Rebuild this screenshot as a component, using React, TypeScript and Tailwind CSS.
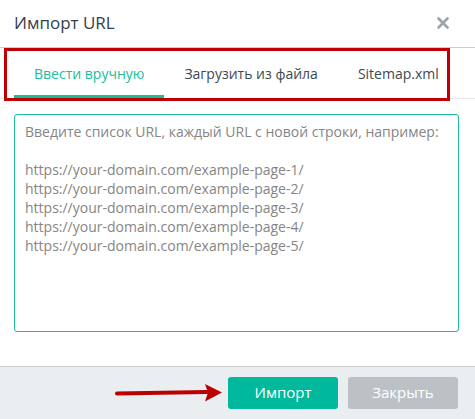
import { useState } from "react";

const tabs = ["Ввести вручную", "Загрузить из файла", "Sitemap.xml"];

const placeholder = [
  "Введите список URL, каждый URL с новой строки, например:",
  "",
  "https://your-domain.com/example-page-1/",
  "https://your-domain.com/example-page-2/",
  "https://your-domain.com/example-page-3/",
  "https://your-domain.com/example-page-4/",
  "https://your-domain.com/example-page-5/",
].join("\n");

function CloseIcon() {
  return (
    <svg width="12" height="12" viewBox="0 0 12 12" className="text-[#9aa3a8]">
      <path d="M1.5 1.5L10.5 10.5M10.5 1.5L1.5 10.5" stroke="currentColor" strokeWidth="2.6" strokeLinecap="round" />
    </svg>
  );
}

function Arrow() {
  return (
    <svg width="108" height="20" viewBox="0 0 108 20" className="mr-[5px]">
      <path d="M2 10.5L92 9" stroke="#bb0000" strokeWidth="4" strokeLinecap="round" />
      <path d="M90 1L107 9.5L90 18.5L93 9.5Z" fill="#bb0000" />
    </svg>
  );
}

export default function App() {
  const [active, setActive] = useState(0);

  return (
    <div className="w-[475px] h-[419px] bg-white flex flex-col font-['Open_Sans',sans-serif]">
      <div className="h-[48px] px-[14px] flex items-center justify-between border-b border-[#c9cccf] shrink-0">
        <h2 className="text-[17px] text-[#34414a] leading-none mt-[-2px]">Импорт URL</h2>
        <button className="mr-[12px] mt-[-1px]">
          <CloseIcon />
        </button>
      </div>

      <div className="relative h-[51px] shrink-0 border-b border-[#e4e6e8] pl-[14px] flex">
        {tabs.map((tab, i) => (
          <button
            key={tab}
            onClick={() => setActive(i)}
            className={
              "px-[20px] pt-[3px] text-[14px] border-b-[3px] " +
              (i === active ? "text-[#1abc9c] border-[#1abc9c]" : "text-[#3d4a52] border-transparent")
            }
          >
            {tab}
          </button>
        ))}
        <div className="absolute left-[4px] top-0 w-[446px] h-[53px] border-[3px] border-[#c00000] pointer-events-none" />
      </div>

      <div className="px-[14px] pt-[15px] flex-1">
        <textarea
          placeholder={placeholder}
          className="w-[445px] h-[218px] resize-none rounded-[3px] border border-[#1abc9c] px-[10px] pt-[7px] text-[14px] leading-[19px] text-[#444] placeholder:text-[#858585] outline-none"
        />
      </div>

      <div className="h-[53px] shrink-0 border-t border-[#c9cccf] bg-[#ebeef0] flex items-center justify-end pr-[17px] pb-[1px]">
        <Arrow />
        <button className="w-[110px] h-[32px] rounded-[3px] bg-[#00b99c] text-white text-[15px]">Импорт</button>
        <button className="ml-[10px] w-[110px] h-[32px] rounded-[3px] bg-[#bcc1c5] text-white text-[15px]">Закрыть</button>
      </div>
    </div>
  );
}
